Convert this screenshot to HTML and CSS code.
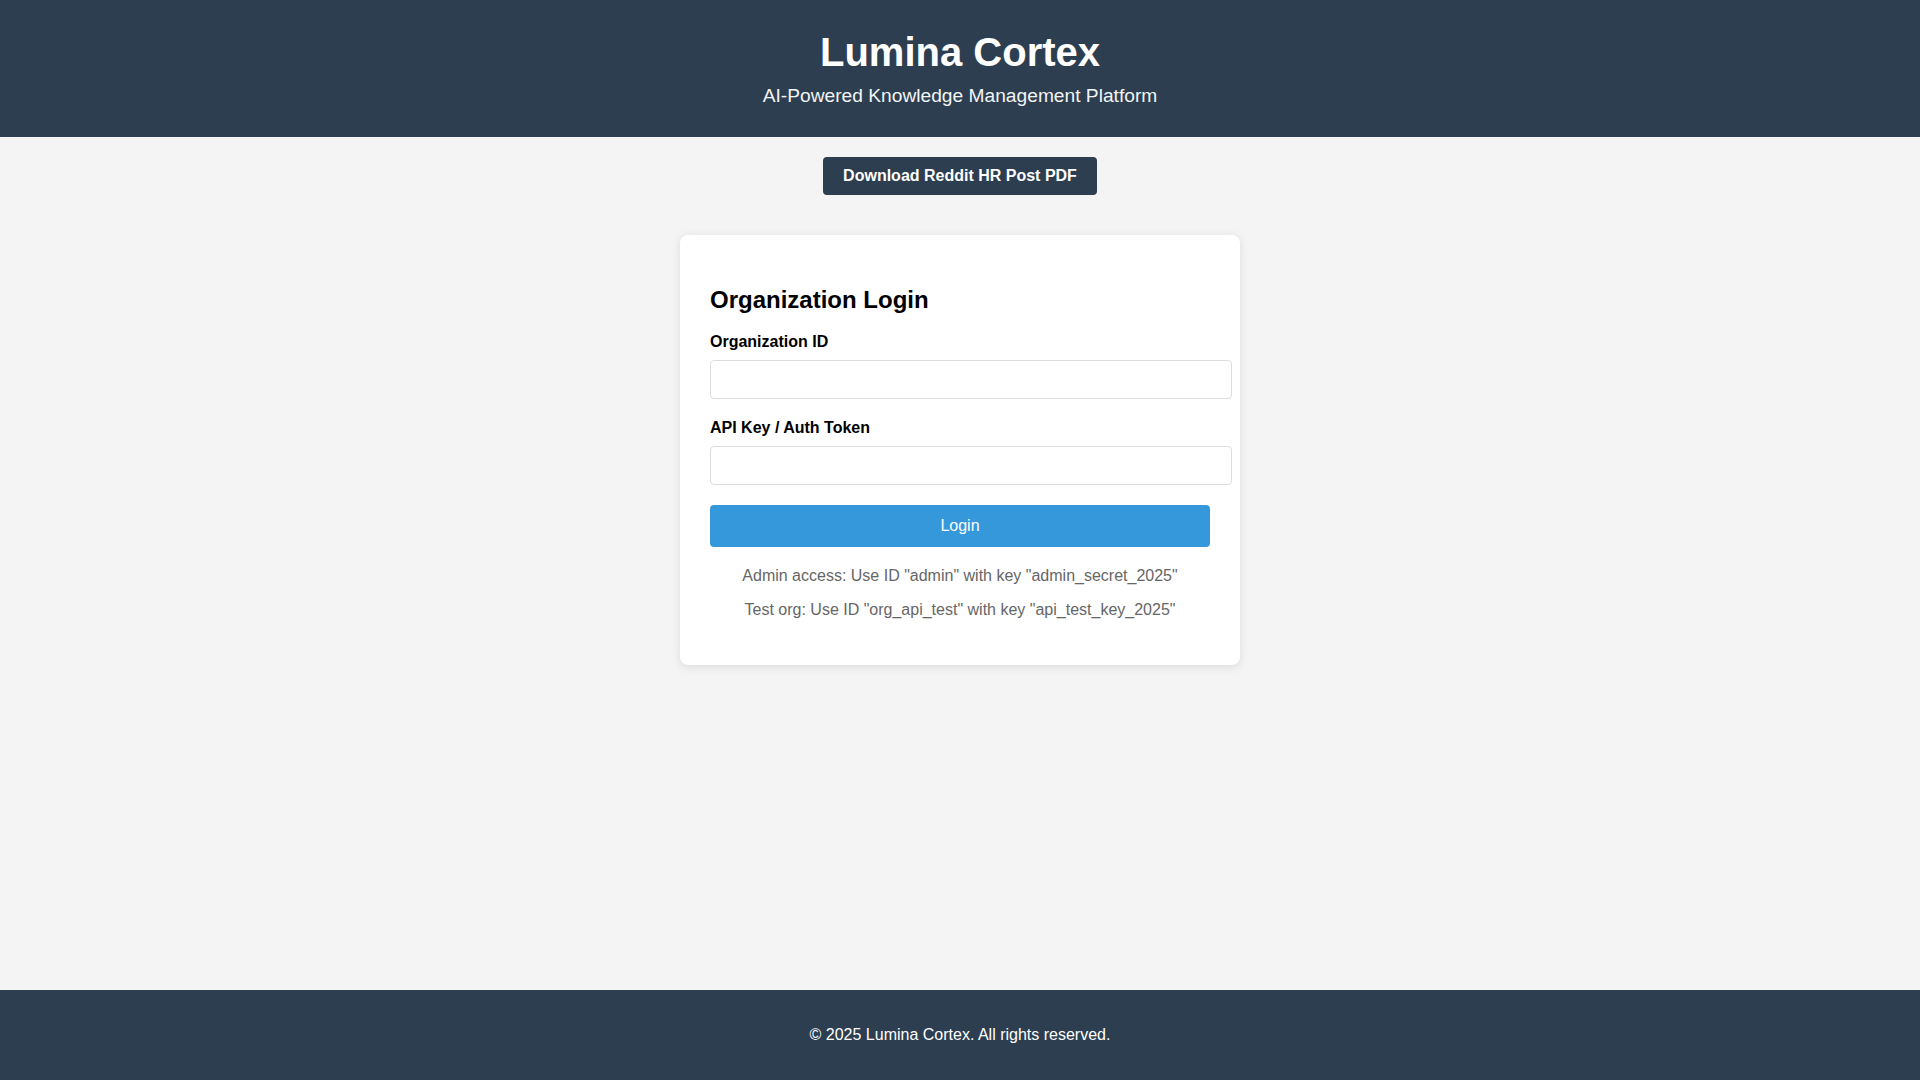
FILE: index.html
```html
<!DOCTYPE html>
<html lang="en">
<head>
<meta charset="utf-8">
<title>Lumina Cortex</title>
<link rel="stylesheet" href="styles.css">
</head>
<body>
<header class="site-header">
  <h1 class="site-title">Lumina Cortex</h1>
  <p class="site-tagline">AI-Powered Knowledge Management Platform</p>
</header>
<main class="main">
  <div class="download-row">
    <button class="download-btn" type="button">Download Reddit HR Post PDF</button>
  </div>
  <section class="login-card">
    <h2 class="login-title">Organization Login</h2>
    <form class="login-form">
      <div class="form-group">
        <label class="form-label" for="org-id">Organization ID</label>
        <input class="form-input" id="org-id" type="text">
      </div>
      <div class="form-group">
        <label class="form-label" for="api-key">API Key / Auth Token</label>
        <input class="form-input" id="api-key" type="password">
      </div>
      <button class="login-btn" type="button">Login</button>
    </form>
    <div class="hints">
      <p class="hint">Admin access: Use ID "admin" with key "admin_secret_2025"</p>
      <p class="hint">Test org: Use ID "org_api_test" with key "api_test_key_2025"</p>
    </div>
  </section>
</main>
<footer class="site-footer">
  <p class="footer-text">© 2025 Lumina Cortex. All rights reserved.</p>
</footer>
</body>
</html>
```
FILE: styles.css
```css
* { box-sizing: content-box; }
html, body { margin: 0; padding: 0; }
body {
  font-family: "Liberation Sans", Arial, sans-serif;
  font-size: 16px;
  background: #f4f4f4;
  color: #000;
  min-height: 100vh;
  display: flex;
  flex-direction: column;
}
.site-header {
  background: #2c3e50;
  color: #fff;
  text-align: center;
  padding: 30px 0 30px;
}
.site-title {
  margin: 0 0 10px;
  font-size: 40px;
  font-weight: bold;
  line-height: normal;
}
.site-tagline {
  margin: 0;
  font-size: 19.2px;
  color: #f2f4f5;
}
.main {
  flex: 1;
  display: flex;
  flex-direction: column;
  align-items: center;
  padding-top: 20px;
}
.download-row {
  display: flex;
  justify-content: center;
  margin-bottom: 40px;
}
.download-btn {
  background: #2c3e50;
  color: #fff;
  border: none;
  border-radius: 4px;
  font-family: "Liberation Sans", Arial, sans-serif;
  font-size: 16px;
  font-weight: bold;
  line-height: normal;
  padding: 10px 20px;
  cursor: pointer;
}
.login-card {
  width: 500px;
  padding: 30px;
  background: #fff;
  border-radius: 8px;
  box-shadow: 0 2px 10px rgba(0, 0, 0, 0.1);
  font-size: 16px;
}
.login-title {
  margin: 21px 0 19px;
  font-size: 24px;
  font-weight: bold;
  line-height: normal;
  color: #000;
}
.login-form { margin: 0; }
.form-group {
  margin-bottom: 20px;
}
.form-label {
  display: block;
  font-weight: bold;
  margin-bottom: 9px;
  color: #000;
}
.form-input {
  display: block;
  width: 100%;
  padding: 10px;
  border: 1px solid #ddd;
  border-radius: 4px;
  font-family: "Liberation Sans", Arial, sans-serif;
  font-size: 15.2px;
  line-height: normal;
  background: #fff;
  margin: 0;
}
.login-btn {
  display: block;
  width: 100%;
  padding: 12px 0;
  background: #3498db;
  color: #fff;
  border: none;
  border-radius: 4px;
  font-family: "Liberation Sans", Arial, sans-serif;
  font-size: 16px;
  line-height: normal;
  cursor: pointer;
}
.hints {
  margin-top: 20px;
  text-align: center;
  font-size: 16px;
  color: #666;
}
.hint {
  margin: 16px 0;
}
.site-footer {
  background: #2c3e50;
  color: #fff;
  text-align: center;
  padding: 36px 0 36px;
}
.footer-text {
  margin: 0;
  font-size: 16px;
  line-height: normal;
}
```
